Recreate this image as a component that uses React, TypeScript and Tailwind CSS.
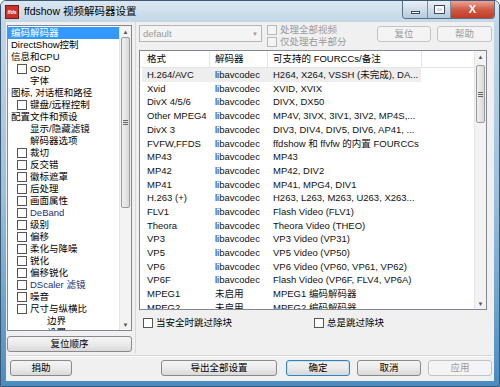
import React from 'react';

const FONT = "font-['Liberation_Sans','Noto_Sans_CJK_SC',sans-serif]";

type TreeItem = { t: string; l: number; cb?: boolean; sel?: boolean; blue?: boolean };

const TREE: TreeItem[] = [
  { t: '编码解码器', l: 0, sel: true },
  { t: 'DirectShow控制', l: 0 },
  { t: '信息和CPU', l: 0 },
  { t: 'OSD', l: 1, cb: true },
  { t: '字体', l: 2 },
  { t: '图标, 对话框和路径', l: 0 },
  { t: '键盘/远程控制', l: 1, cb: true },
  { t: '配置文件和预设', l: 0 },
  { t: '显示/隐藏滤镜', l: 2 },
  { t: '解码器选项', l: 2 },
  { t: '裁切', l: 1, cb: true },
  { t: '反交错', l: 1, cb: true },
  { t: '徽标遮罩', l: 1, cb: true },
  { t: '后处理', l: 1, cb: true },
  { t: '画面属性', l: 1, cb: true },
  { t: 'DeBand', l: 1, cb: true, blue: true },
  { t: '级别', l: 1, cb: true },
  { t: '偏移', l: 1, cb: true },
  { t: '柔化与降噪', l: 1, cb: true },
  { t: '锐化', l: 1, cb: true },
  { t: '偏移锐化', l: 1, cb: true },
  { t: 'DScaler 滤镜', l: 1, cb: true, blue: true },
  { t: '噪音', l: 1, cb: true },
  { t: '尺寸与纵横比', l: 1, cb: true },
  { t: '边界', l: 3 },
  { t: '设置', l: 3 },
];

const CODECS: [string, string, string][] = [
  ['H.264/AVC', 'libavcodec', 'H264, X264, VSSH (未完成), DA...'],
  ['Xvid', 'libavcodec', 'XVID, XVIX'],
  ['DivX 4/5/6', 'libavcodec', 'DIVX, DX50'],
  ['Other MPEG4', 'libavcodec', 'MP4V, 3IVX, 3IV1, 3IV2, MP4S,...'],
  ['DivX 3', 'libavcodec', 'DIV3, DIV4, DIV5, DIV6, AP41, ...'],
  ['FVFW,FFDS', 'libavcodec', 'ffdshow 和 ffvfw 的内置 FOURCCs'],
  ['MP43', 'libavcodec', 'MP43'],
  ['MP42', 'libavcodec', 'MP42, DIV2'],
  ['MP41', 'libavcodec', 'MP41, MPG4, DIV1'],
  ['H.263 (+)', 'libavcodec', 'H263, L263, M263, U263, X263...'],
  ['FLV1', 'libavcodec', 'Flash Video (FLV1)'],
  ['Theora', 'libavcodec', 'Theora Video (THEO)'],
  ['VP3', 'libavcodec', 'VP3 Video (VP31)'],
  ['VP5', 'libavcodec', 'VP5 Video (VP50)'],
  ['VP6', 'libavcodec', 'VP6 Video (VP60, VP61, VP62)'],
  ['VP6F', 'libavcodec', 'Flash Video (VP6F, FLV4, VP6A)'],
  ['MPEG1', '未启用', 'MPEG1 编码解码器'],
  ['MPEG2', '未启用', 'MPEG2 编码解码器'],
];

const PAD = ['pl-[3px]', 'pl-[9px]', 'pl-[22px]', 'pl-[39px]'];

const Box = ({ disabled }: { disabled?: boolean }) => (
  <span
    className={`inline-block w-[10px] h-[10px] shrink-0 border ${
      disabled ? 'border-[#b8b8b8] bg-[#f4f4f4]' : 'border-[#555] bg-white'
    }`}
  />
);

const Btn = ({
  children,
  w,
  disabled,
  def,
}: {
  children: React.ReactNode;
  w: string;
  disabled?: boolean;
  def?: boolean;
}) => (
  <div
    className={`${w} h-[16px] flex items-center justify-center rounded-[3px] border ${
      disabled
        ? 'border-[#c2c5c8] bg-[#f4f4f4] text-[#9a9a9a]'
        : def
        ? 'border-[#3c7fb1] bg-gradient-to-b from-[#f2f2f2] via-[#ebebeb] to-[#d6d6d6] text-black shadow-[inset_0_0_0_1px_#bfe3f7]'
        : 'border-[#8a8a8a] bg-gradient-to-b from-[#f4f4f4] via-[#ebebeb] to-[#d9d9d9] text-black'
    }`}
  >
    {children}
  </div>
);

const ScrollBar = ({ top, h }: { top: number; h: number }) => (
  <div className="w-[12px] h-full bg-[#f3f3f3] border-l border-[#e6e6e6] flex flex-col">
    <div className="h-[11px] flex items-center justify-center text-[6px] text-[#555]">▲</div>
    <div className="flex-1 relative">
      <div
        className="absolute left-[1px] right-[1px] rounded-[2px] border border-[#9a9a9a] bg-gradient-to-r from-[#f0f0f0] to-[#d9d9d9] flex items-center justify-center"
        style={{ top, height: h }}
      >
        <div className="w-[5px] flex flex-col gap-[1px]">
          <div className="h-px bg-[#666]" />
          <div className="h-px bg-[#666]" />
          <div className="h-px bg-[#666]" />
        </div>
      </div>
    </div>
    <div className="h-[11px] flex items-center justify-center text-[6px] text-[#555]">▼</div>
  </div>
);

export default function App() {
  return (
    <div
      className={`w-[500px] h-[387px] ${FONT} text-[9.5px] leading-none bg-gradient-to-b from-[#c6d9e8] via-[#9cc0da] to-[#4b8cc0] rounded-t-[6px] border border-[#3c5874] flex flex-col overflow-hidden`}
    >
      {/* title bar */}
      <div className="h-[21px] flex items-start relative bg-gradient-to-b from-[#dbe7f1] to-[#c3d7e7]">
        <div className="mt-[4px] ml-[4px] w-[14px] h-[14px] bg-[#c8332b] border border-[#7a1a14] flex items-center justify-center text-[5px] text-white font-bold italic">
          ffds
        </div>
        <div className="ml-[5px] mt-[5px] text-[10.5px] text-black">ffdshow 视频解码器设置</div>
        <div className="ml-auto mr-[4px] flex h-[18px] border border-t-0 border-[#5b6f86] rounded-b-[4px] overflow-hidden">
          <div className="w-[25px] bg-gradient-to-b from-[#eaf1f7] to-[#b4cadd] border-r border-[#7a8ea4] flex items-center justify-center">
            <div className="w-[9px] h-[3px] bg-white border border-[#3c4a5a] mt-[5px]" />
          </div>
          <div className="w-[23px] bg-gradient-to-b from-[#eaf1f7] to-[#b4cadd] border-r border-[#7a8ea4] flex items-center justify-center">
            <div className="w-[9px] h-[7px] border-[2px] border-white outline outline-1 outline-[#3c4a5a]" />
          </div>
          <div className="w-[43px] bg-gradient-to-b from-[#e9a595] via-[#cf5a45] to-[#c23a22] flex items-center justify-center text-white text-[11px] font-bold">
            X
          </div>
        </div>
      </div>

      {/* client */}
      <div className="mx-[5px] h-[359px] bg-[#f0f0f0] flex flex-col">
        <div className="flex h-[331px]">
          {/* left column */}
          <div className="w-[125px] ml-[1px] pt-[3px] flex flex-col">
            <div className="h-[306px] border border-[#828790] bg-white flex overflow-hidden">
              <div className="flex-1 pt-[1px] overflow-hidden">
                {TREE.map((it, i) => (
                  <div
                    key={i}
                    className={`h-[12px] flex items-center gap-[3px] whitespace-nowrap ${
                      it.sel ? 'bg-[#3399ff] text-white' : it.blue ? 'text-[#243070]' : 'text-black'
                    } ${PAD[it.l]}`}
                  >
                    {it.cb && <Box />}
                    <span>{it.t}</span>
                  </div>
                ))}
              </div>
              <ScrollBar top={0} h={171} />
            </div>
            <div className="mt-[5px]">
              <Btn w="w-[125px]">复位顺序</Btn>
            </div>
          </div>

          {/* right panel */}
          <div className="flex-1 ml-[3px] border-l border-[#d9d9d9] flex flex-col pl-[3px]">
            <div className="flex items-start pt-[3px] h-[28px]">
              <div className="w-[123px] h-[17px] border border-[#b5b5b5] bg-[#f4f4f4] flex items-center">
                <span className="pl-[3px] text-[#9a9a9a] flex-1">default</span>
                <span className="w-[12px] text-[6px] text-[#9a9a9a] text-center">▼</span>
              </div>
              <div className="ml-[5px] flex flex-col gap-[2px] text-[#9a9a9a]">
                <div className="flex items-center gap-[3px] h-[10px]">
                  <Box disabled />
                  处理全部视频
                </div>
                <div className="flex items-center gap-[3px] h-[10px]">
                  <Box disabled />
                  仅处理右半部分
                </div>
              </div>
              <div className="ml-auto mr-[2px] mt-[1px] flex gap-[6px]">
                <Btn w="w-[54px]" disabled>
                  复位
                </Btn>
                <Btn w="w-[55px]" disabled>
                  帮助
                </Btn>
              </div>
            </div>

            {/* list view */}
            <div className="w-[348px] h-[260px] border border-[#828790] bg-white flex overflow-hidden">
              <div className="flex-1 overflow-hidden">
                <div className="h-[17px] flex items-center border-b border-[#e5e5e5] text-black">
                  <div className="w-[70px] pl-[7px] h-full flex items-center border-r border-[#e5e5e5]">格式</div>
                  <div className="w-[58px] pl-[5px] h-full flex items-center border-r border-[#e5e5e5]">解码器</div>
                  <div className="w-[154px] pl-[5px] h-full flex items-center border-r border-[#e5e5e5]">
                    可支持的 FOURCCs/备注
                  </div>
                </div>
                {CODECS.map((r, i) => (
                  <div
                    key={i}
                    className={`h-[13.7px] flex items-center whitespace-nowrap text-[#111] ${
                      i === 0 ? 'bg-[#eeeeee] w-[279px] ml-[2px]' : 'ml-[2px]'
                    }`}
                  >
                    <div className="w-[68px] pl-[5px]">{r[0]}</div>
                    <div className="w-[58px] pl-[5px]">{r[1]}</div>
                    <div className="pl-[5px]">{r[2]}</div>
                  </div>
                ))}
              </div>
              <ScrollBar top={3} h={58} />
            </div>

            <div className="flex items-center h-[26px] pl-[4px]">
              <div className="flex items-center gap-[3px] w-[171px]">
                <Box />
                当安全时跳过除块
              </div>
              <div className="flex items-center gap-[3px]">
                <Box />
                总是跳过除块
              </div>
            </div>
          </div>
        </div>

        {/* separator */}
        <div className="h-[2px] mt-[2px] mx-[1px] border-t border-[#d5d5d5] border-b-white border-b" />

        {/* bottom buttons */}
        <div className="flex items-center h-[22px] pl-[4px] pr-[2px]">
          <Btn w="w-[62px]">捐助</Btn>
          <div className="ml-[89px]">
            <Btn w="w-[116px]">导出全部设置</Btn>
          </div>
          <div className="ml-auto flex gap-[7px]">
            <Btn w="w-[64px]" def>
              确定
            </Btn>
            <Btn w="w-[64px]">取消</Btn>
            <Btn w="w-[64px]" disabled>
              应用
            </Btn>
          </div>
        </div>
      </div>
      <div className="flex-1" />
    </div>
  );
}
